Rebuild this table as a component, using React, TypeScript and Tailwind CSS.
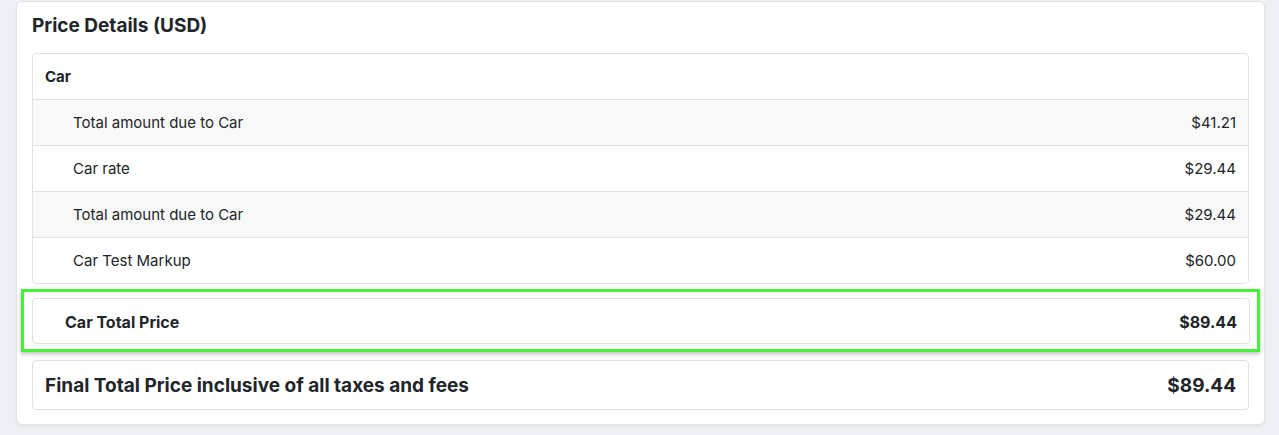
const rows = [
  { label: 'Total amount due to Car', amount: '$41.21' },
  { label: 'Car rate', amount: '$29.44' },
  { label: 'Total amount due to Car', amount: '$29.44' },
  { label: 'Car Test Markup', amount: '$60.00' },
]

export default function App() {
  return (
    <div className="min-h-[435px] bg-[#edf1f5] px-[16px] pt-px text-[#212529]" style={{ fontFamily: 'Inter, "Noto Sans", sans-serif' }}>
      <div className="w-[1249px] rounded-md border border-[#e2e5e8] bg-white px-[15px] pb-[14px] shadow-[0_1px_2px_rgba(0,0,0,0.08)]">
        <h2 className="flex h-[51px] items-center pb-[3px] text-[19px] font-bold">Price Details (USD)</h2>

        <div className="overflow-hidden rounded border border-[#dee2e6]">
          <div className="flex h-[45px] items-center px-3 pt-px text-[15px] font-bold">Car</div>
          {rows.map((r, i) => (
            <div
              key={i}
              className={`flex h-[46px] items-center justify-between border-t border-[#dee2e6] pl-10 pr-3 pt-[2px] text-[15px] ${i % 2 === 0 ? 'bg-[#f9f9f9]' : 'bg-white'}`}
            >
              <span>{r.label}</span>
              <span>{r.amount}</span>
            </div>
          ))}
        </div>

        <div className="-mx-[11px] mt-[5px] border-[3px] border-[#47f03a] pt-[6px] pb-[5px] pl-[8px] pr-[7px] shadow-[0_2px_4px_rgba(0,0,0,0.25)]">
          <div className="flex h-[46px] items-center justify-between rounded border border-[#dee2e6] pl-8 pr-3 pt-[2px] text-[16px] font-bold">
            <span>Car Total Price</span>
            <span>$89.44</span>
          </div>
        </div>

        <div className="mt-[8px] flex h-[50px] items-center justify-between rounded border border-[#dee2e6] px-3 pt-[3px] text-[19px] font-bold">
          <span>Final Total Price inclusive of all taxes and fees</span>
          <span>$89.44</span>
        </div>
      </div>
    </div>
  )
}
